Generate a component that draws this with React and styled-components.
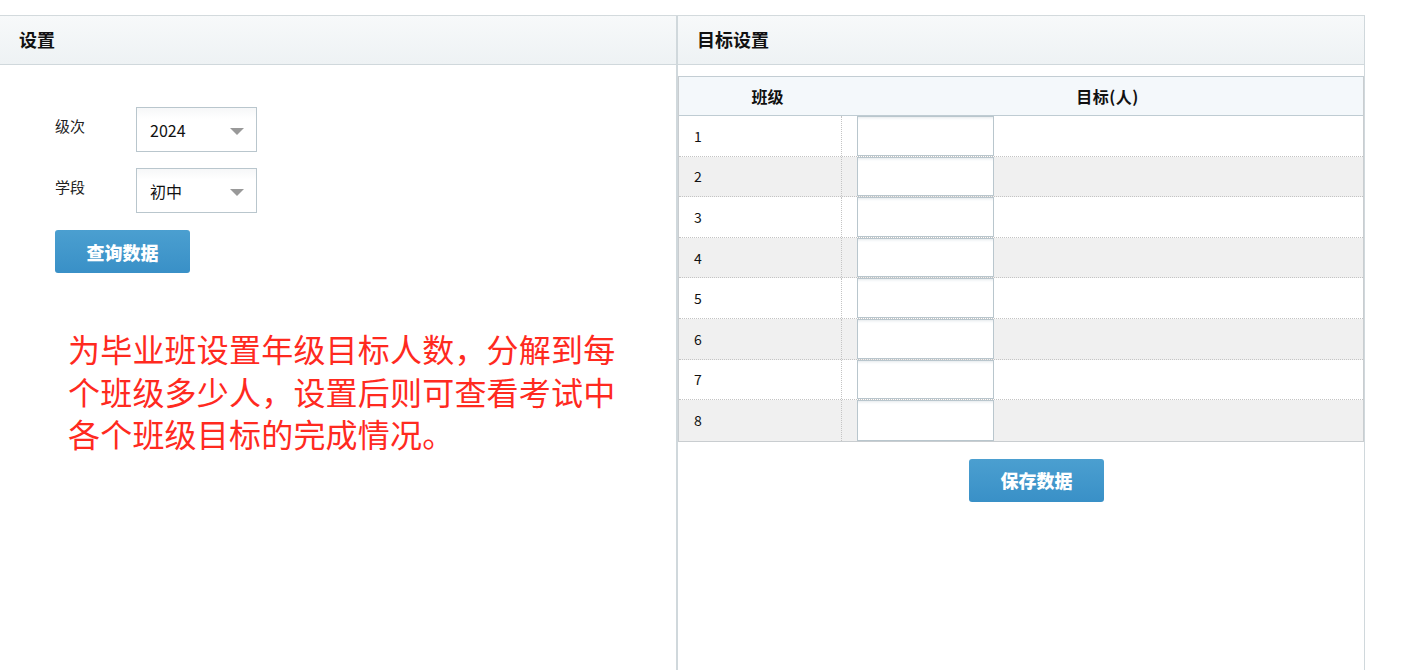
import React from 'react'
import styled, { createGlobalStyle } from 'styled-components'

const GlobalStyle = createGlobalStyle`
    html, body {
        margin: 0;
        padding: 0;
        background: #fff;
        font-family: "Noto Sans CJK SC", "Noto Sans", sans-serif;
        color: #222;
    }
`

const Page = styled.div`
    display: flex;
    width: 1365px;
    height: 655px;
    margin-top: 15px;
    border-top: 1px solid #d3dadd;
    box-sizing: border-box;
`

const Panel = styled.div`
    display: flex;
    flex-direction: column;
    width: ${props => props.width}px;
    border-left: ${props => props.left ? "1px solid #d0d8dc" : "none"};
    border-right: 1px solid #d0d8dc;
    box-sizing: border-box;
`

const PanelHeader = styled.div`
    height: 49px;
    display: flex;
    align-items: center;
    padding: 0 0 2px 19px;
    font-size: 18px;
    font-weight: bold;
    color: #111;
    background: linear-gradient(#f7f9fa, #eef2f4);
    border-bottom: 1px solid #d0d8dc;
    box-sizing: border-box;
`

const Form = styled.div`
    display: flex;
    flex-direction: column;
    gap: 16px;
    padding: 42px 0 0 55px;
`

const Field = styled.div`
    display: flex;
    align-items: center;
`

const Label = styled.div`
    width: 81px;
    font-size: 15px;
    margin-top: -8px;
    color: #222;
`

const Select = styled.div`
    position: relative;
    width: 121px;
    height: 45px;
    display: flex;
    align-items: center;
    padding-left: 13px;
    font-size: 16px;
    color: #111;
    border: 1px solid #b9c6cd;
    background: linear-gradient(#f6f7f8, #fff 25%);
    box-sizing: border-box;

    &::after{
        content: "";
        position: absolute;
        right: 12px;
        top: 20px;
        border-left: 7px solid transparent;
        border-right: 7px solid transparent;
        border-top: 7px solid #999;
    }
`

const Button = styled.div`
    width: 135px;
    height: 43px;
    display: flex;
    align-items: center;
    justify-content: center;
    font-size: 18px;
    font-weight: 900;
    color: #fff;
    border-radius: 3px;
    background: linear-gradient(#4b9fd0, #3990c7);
    cursor: pointer;
`

const QueryButton = styled(Button)`
    margin-top: 1px;
`

const Note = styled.div`
    margin: 54px 0 0 68px;
    width: 560px;
    font-size: 32px;
    line-height: 42.5px;
    color: #ff2a1f;
    letter-spacing: 0.2px;
`

const Table = styled.div`
    margin: 11px 0 0 0;
    border: 1px solid #c9cdd0;
    border-top-color: #c3cdd3;
`

const HeadRow = styled.div`
    display: grid;
    grid-template-columns: 163px 1fr;
    height: 38px;
    background: #f4f8fb;
    border-bottom: 1px solid #bfccd3;
    font-size: 16px;
    font-weight: bold;
    color: #111;

    & div{
        display: flex;
        align-items: center;
        justify-content: center;
    }

    & div:nth-child(1){
        padding-left: 14px;
    }

    & div:nth-child(2){
        padding-left: 10px;
        letter-spacing: 0.5px;
    }
`

const Row = styled.div`
    display: grid;
    grid-template-columns: 163px 1fr;
    height: 40.6px;
    background: ${props => props.even ? "#f0f0f0" : "#fff"};
    border-bottom: ${props => props.last ? "none" : "1px dotted #c4c4c4"};
    box-sizing: border-box;
    font-size: 14px;
    color: #111;
`

const NumCell = styled.div`
    display: flex;
    align-items: center;
    padding-left: 15px;
    border-right: 1px dotted #c4c4c4;
`

const InputCell = styled.div`
    padding-left: 15px;
    display: flex;
`

const Input = styled.input`
    width: 137px;
    height: 100%;
    margin: 0;
    border: 1px solid #b9c6cd;
    background: #fff;
    box-shadow: inset 0 3px 3px -2px #e3e8eb;
    box-sizing: border-box;
    outline: none;
`

const SaveBar = styled.div`
    display: flex;
    justify-content: center;
    padding: 17px 0 0 31px;
`

const classes = [1, 2, 3, 4, 5, 6, 7, 8]

const App = () => {
    return (
        <>
            <GlobalStyle />
            <Page>
                <Panel width={677}>
                    <PanelHeader>设置</PanelHeader>
                    <Form>
                        <Field>
                            <Label>级次</Label>
                            <Select>2024</Select>
                        </Field>
                        <Field>
                            <Label>学段</Label>
                            <Select>初中</Select>
                        </Field>
                        <QueryButton>查询数据</QueryButton>
                    </Form>
                    <Note>为毕业班设置年级目标人数，分解到每个班级多少人，设置后则可查看考试中各个班级目标的完成情况。</Note>
                </Panel>
                <Panel width={688} left>
                    <PanelHeader>目标设置</PanelHeader>
                    <Table>
                        <HeadRow>
                            <div>班级</div>
                            <div>目标(人)</div>
                        </HeadRow>
                        {classes.map(n => (
                            <Row key={n} even={n % 2 === 0} last={n === classes.length}>
                                <NumCell>{n}</NumCell>
                                <InputCell>
                                    <Input type="text" />
                                </InputCell>
                            </Row>
                        ))}
                    </Table>
                    <SaveBar>
                        <Button>保存数据</Button>
                    </SaveBar>
                </Panel>
            </Page>
        </>
    )
}

export default App
